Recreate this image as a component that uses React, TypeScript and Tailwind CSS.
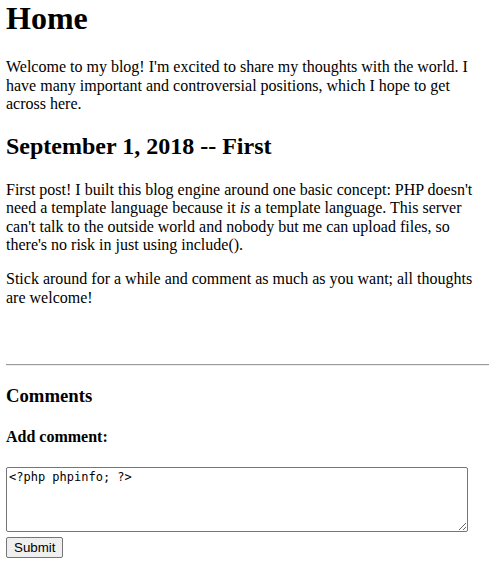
import React from 'react';

const App = () => {
  return (
    <div className="min-h-screen bg-white pl-[6px] pr-[9px] pb-4 text-black text-[16px] leading-[1.15] font-['Liberation_Serif','Times_New_Roman',serif]">
      <h1 className="text-[32px] font-bold mb-[21.44px]">Home</h1>
      <p className="mb-4">
        Welcome to my blog! I'm excited to share my thoughts with the world. I have many important and
        controversial positions, which I hope to get across here.
      </p>

      <h2 className="text-[24px] font-bold mt-[19.92px] mb-[19.92px]">September 1, 2018 -- First</h2>
      <p className="mb-4">
        First post! I built this blog engine around one basic concept: PHP doesn't need a template language
        because it <i>is</i> a template language. This server can't talk to the outside world and nobody but
        me can upload files, so there's no risk in just using include().
      </p>
      <p>
        Stick around for a while and comment as much as you want; all thoughts are welcome!
      </p>

      <hr className="mt-[57px] border-t border-b border-t-[#9a9a9a] border-b-[#eeeeee]" />

      {/* Comments */}
      <h3 className="text-[18.72px] font-bold mt-[18.72px]">Comments</h3>
      <h4 className="text-[16px] font-bold mt-[21.28px] mb-[21.28px]">Add comment:</h4>
      <form>
        <textarea
          defaultValue="<?php phpinfo; ?>"
          className="block w-[462px] h-[65px] border border-[#767676] rounded-[2px] px-[2px] py-[2px] text-[12px] leading-[15px] font-['DejaVu_Sans_Mono',monospace]"
        />
        <button
          type="submit"
          className="block mt-[5px] h-[21px] px-[7px] border border-[#767676] rounded-[2px] bg-[#efefef] text-[13.33px] leading-[15px] font-['Liberation_Sans',Arial,sans-serif]"
        >
          Submit
        </button>
      </form>
    </div>
  );
};

export default App;
